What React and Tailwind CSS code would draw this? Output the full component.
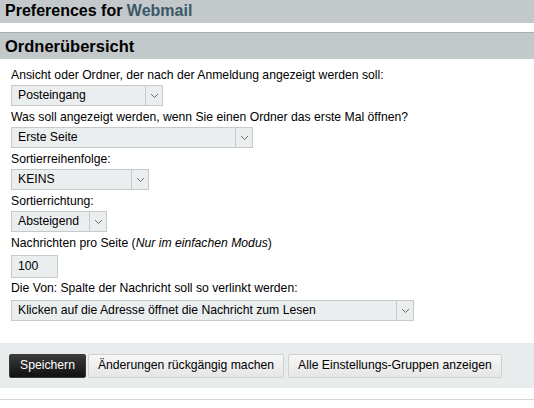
const font = { fontFamily: '"Liberation Sans", Arial, sans-serif' }

function Chevron() {
  return (
    <svg width="9" height="6" viewBox="0 0 9 6" className="block">
      <path d="M1 1 L4.5 4.5 L8 1" fill="none" stroke="#6b6f72" strokeWidth="1" />
    </svg>
  )
}

function Select({ value, width }) {
  return (
    <div
      className="flex h-[21px] border border-[#c6cacc] bg-[#ebeeef] text-black"
      style={{ width }}
    >
      <div className="flex-1 pl-[6px] leading-[19px] truncate">{value}</div>
      <div className="flex w-[17px] items-center justify-center border-l border-[#c6cacc]">
        <Chevron />
      </div>
    </div>
  )
}

export default function App() {
  const rows = [
    { label: 'Ansicht oder Ordner, der nach der Anmeldung angezeigt werden soll:', value: 'Posteingang', width: 152 },
    { label: 'Was soll angezeigt werden, wenn Sie einen Ordner das erste Mal öffnen?', value: 'Erste Seite', width: 242 },
    { label: 'Sortierreihenfolge:', value: 'KEINS', width: 138 },
    { label: 'Sortierrichtung:', value: 'Absteigend', width: 96 },
  ]

  return (
    <div className="w-[534px] h-[408px] bg-white overflow-hidden" style={font}>
      <div className="h-[23px] bg-[#c3c9cb] pl-[5px] text-[16px] font-bold leading-[21px] text-black">
        Preferences for <span className="text-[#3b5868]">Webmail</span>
      </div>
      <div className="mt-[9px] h-[27px] border-t border-[#a9afb1] bg-[#c3c9cb] pl-[5px] text-[16.5px] font-bold leading-[26px] text-black">
        Ordnerübersicht
      </div>

      <div className="pl-[11px] pt-[6px] text-[12.2px] text-black">
        {rows.map(r => (
          <div key={r.label} className="mb-[1px]">
            <div className="h-[20px] leading-[20px]">{r.label}</div>
            <Select value={r.value} width={r.width} />
          </div>
        ))}
        <div className="h-[21px] leading-[21px]">
          Nachrichten pro Seite (<i>Nur im einfachen Modus</i>)
        </div>
        <div className="mt-[1px] h-[23px] w-[47px] border border-[#c6cacc] bg-[#ebeeef] pl-[6px] leading-[21px]">100</div>
        <div className="h-[22px] leading-[21px]">Die Von: Spalte der Nachricht soll so verlinkt werden:</div>
        <Select value="Klicken auf die Adresse öffnet die Nachricht zum Lesen" width={403} />
      </div>

      <div className="mt-[22px] flex h-[45px] items-center bg-[#e9ecec] pl-[9px] text-[12.2px] whitespace-nowrap">
        <button className="h-[24px] w-[77px] shrink-0 rounded-[2px] border border-[#3a3a3a] bg-gradient-to-b from-[#3c3c3c] to-[#111] text-white">
          Speichern
        </button>
        <button className="ml-[2px] h-[24px] w-[196px] shrink-0 rounded-[2px] border border-[#cfd2d3] bg-gradient-to-b from-[#f7f7f7] to-[#e6e6e6] text-black">
          Änderungen rückgängig machen
        </button>
        <button className="ml-[4px] h-[24px] w-[214px] shrink-0 rounded-[2px] border border-[#cfd2d3] bg-gradient-to-b from-[#f7f7f7] to-[#e6e6e6] text-black">
          Alle Einstellungs-Gruppen anzeigen
        </button>
      </div>
      <div className="mt-[11px] border-t border-[#d3d5d6]" />
    </div>
  )
}
